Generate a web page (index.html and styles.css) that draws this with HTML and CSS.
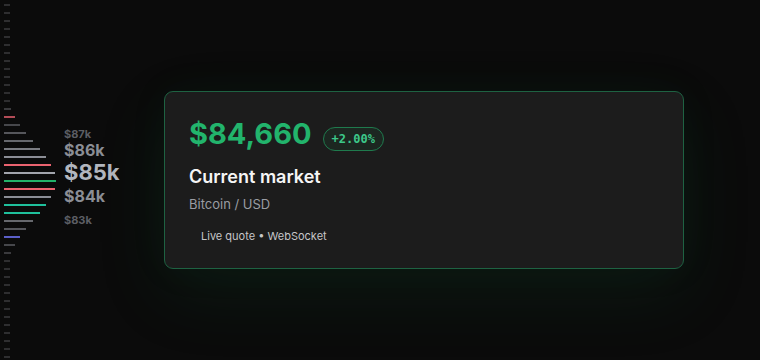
FILE: index.html
```html
<!DOCTYPE html>
<html lang="en">
<head>
	<meta charset="UTF-8">
	<title>BTC / USD</title>
	<link rel="stylesheet" href="styles.css">
</head>
<body>
	<div class="ladder">
		<div class="ticks">
			<i></i><i></i><i></i><i></i><i></i><i></i><i></i><i></i><i></i><i></i><i></i><i></i><i></i>
			<i class="w7"></i>
			<i class="w11 red-dim"></i>
			<i class="w16 g1"></i>
			<i class="w22 g2"></i>
			<i class="w29 g3"></i>
			<i class="w36 g4"></i>
			<i class="w42 g5"></i>
			<i class="w47 red"></i>
			<i class="w51 g6"></i>
			<i class="w52 green"></i>
			<i class="w51 red"></i>
			<i class="w47 g5"></i>
			<i class="w42 teal"></i>
			<i class="w36 teal"></i>
			<i class="w29 g3"></i>
			<i class="w22 g2"></i>
			<i class="w16 blue"></i>
			<i class="w11 g1"></i>
			<i class="w7"></i>
			<i></i><i></i><i></i><i></i><i></i><i></i><i></i><i></i><i></i><i></i><i></i><i></i><i></i>
		</div>
		<div class="levels">
			<span class="lv lv-far lv-87">$87k</span>
			<span class="lv lv-near lv-86">$86k</span>
			<span class="lv lv-now">$85k</span>
			<span class="lv lv-near lv-84">$84k</span>
			<span class="lv lv-far lv-83">$83k</span>
		</div>
	</div>

	<div class="main">
		<div class="card">
			<div class="price-row">
				<span class="price">$84,660</span>
				<span class="change">+2.00%</span>
			</div>
			<div class="title">Current market</div>
			<div class="pair">Bitcoin / USD</div>
			<div class="source">Live quote • WebSocket</div>
		</div>
	</div>
</body>
</html>
```

FILE: styles.css
```css
*{
	padding:0;
	margin:0;
	box-sizing: border-box;
}
body{
	display: flex;
	height: 360px;
	background: #0b0b0b;
	color: #fff;
	font-family: Inter, "Liberation Sans", sans-serif;
	overflow: hidden;
}
.ladder{
	display: flex;
	flex-shrink: 0;
	width: 88px;
	padding-left: 4px;
}
.ticks{
	display: flex;
	flex-direction: column;
	gap: 6px;
	width: 52px;
	padding-top: 4px;
}
.ticks i{
	display: block;
	width: 6px;
	height: 2px;
	background: #2e2e30;
}
.ticks .w7{ width: 7px; background: #3a3a3d; }
.ticks .w11{ width: 11px; }
.ticks .w16{ width: 16px; }
.ticks .w22{ width: 22px; }
.ticks .w29{ width: 29px; }
.ticks .w36{ width: 36px; }
.ticks .w42{ width: 42px; }
.ticks .w47{ width: 47px; }
.ticks .w51{ width: 51px; }
.ticks .w52{ width: 52px; }
.ticks .g1{ background: #46474b; }
.ticks .g2{ background: #55565b; }
.ticks .g3{ background: #66686d; }
.ticks .g4{ background: #7a7c82; }
.ticks .g5{ background: #8c8e96; }
.ticks .g6{ background: #a2a5ad; }
.ticks .red{ background: #ea6370; }
.ticks .red-dim{ background: #b24c57; }
.ticks .green{ background: #22b26a; }
.ticks .teal{ background: #1fc09c; }
.ticks .blue{ background: #5b5fc8; }

.levels{
	display: flex;
	flex-direction: column;
	align-items: flex-start;
	margin-left: 8px;
	padding-top: 128px;
	font-weight: 700;
	white-space: nowrap;
}
.lv-far{
	font-size: 11px;
	line-height: 12px;
	color: #5c5e64;
}
.lv-near{
	font-size: 16px;
	line-height: 16px;
	color: #8b8e95;
}
.lv-86{ margin-top: 2px; }
.lv-now{
	margin-top: 2px;
	font-size: 22px;
	line-height: 24px;
	color: #b2b6be;
}
.lv-84{ margin-top: 4px; }
.lv-83{ margin-top: 10px; }

.main{
	flex: 1;
	display: flex;
	align-items: center;
	justify-content: center;
}
.card{
	width: 520px;
	height: 178px;
	padding: 22px 24px 0;
	background: #1c1c1c;
	border: 1px solid #1e6242;
	border-radius: 9px;
	box-shadow: 0 24px 70px rgba(20, 110, 65, 0.14), 0 0 40px rgba(20, 110, 65, 0.06);
}
.price-row{
	display: flex;
	align-items: center;
	gap: 11px;
}
.price{
	font-size: 29px;
	line-height: 40px;
	font-weight: 700;
	color: #22b46c;
}
.change{
	margin-top: 9px;
	padding: 0 8px;
	height: 24px;
	line-height: 22px;
	border: 1px solid #1f7a4d;
	border-radius: 12px;
	background: rgba(34, 180, 108, 0.08);
	font-family: "DejaVu Sans Mono", "Liberation Mono", monospace;
	font-size: 12px;
	font-weight: 700;
	color: #3cc98a;
}
.title{
	margin-top: 11px;
	font-size: 18px;
	line-height: 24px;
	font-weight: 600;
	color: #f5f5f5;
}
.pair{
	margin-top: 6px;
	font-size: 13px;
	line-height: 18px;
	color: #9a9ca3;
}
.source{
	margin-top: 16px;
	padding-left: 12px;
	font-size: 11px;
	line-height: 14px;
	color: #c6c6c8;
}
```
